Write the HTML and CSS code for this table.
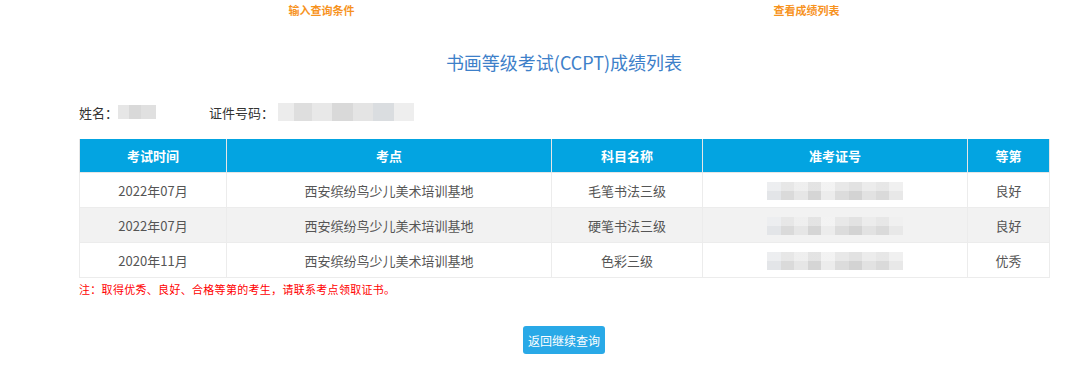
FILE: index.html
```html
<!DOCTYPE html>
<html lang="zh-CN">
<head>
<meta charset="utf-8">
<title>成绩列表</title>
<link rel="stylesheet" href="styles.css">
</head>
<body>
<div class="page">
  <div class="tabs">
    <div class="tab">输入查询条件</div>
    <div class="tab">查看成绩列表</div>
  </div>
  <h1 class="title">书画等级考试(CCPT)成绩列表</h1>
  <div class="info">
    <span class="label">姓名：</span><span class="blur blur-name"></span>
    <span class="label label-id">证件号码：</span><span class="blur blur-id"></span>
  </div>
  <table class="grid">
    <colgroup>
      <col class="c1"><col class="c2"><col class="c3"><col class="c4"><col class="c5">
    </colgroup>
    <thead>
      <tr><th>考试时间</th><th>考点</th><th>科目名称</th><th>准考证号</th><th>等第</th></tr>
    </thead>
    <tbody>
      <tr><td>2022年07月</td><td>西安缤纷鸟少儿美术培训基地</td><td>毛笔书法三级</td><td><span class="blur blur-no"></span></td><td>良好</td></tr>
      <tr class="alt"><td>2022年07月</td><td>西安缤纷鸟少儿美术培训基地</td><td>硬笔书法三级</td><td><span class="blur blur-no"></span></td><td>良好</td></tr>
      <tr><td>2020年11月</td><td>西安缤纷鸟少儿美术培训基地</td><td>色彩三级</td><td><span class="blur blur-no"></span></td><td>优秀</td></tr>
    </tbody>
  </table>
  <p class="note">注：取得优秀、良好、合格等第的考生，请联系考点领取证书。</p>
  <div class="actions"><button class="btn">返回继续查询</button></div>
</div>
</body>
</html>
```
FILE: styles.css
```css
html, body { margin: 0; padding: 0; background: #fff; }
body { font-family: "Microsoft YaHei", "Noto Sans CJK SC", "Noto Sans", sans-serif; color: #333; }
.page { width: 970px; margin-left: 79px; }
.tabs { display: flex; height: 20px; align-items: center; }
.tab { flex: 1; text-align: center; font-size: 11px; font-weight: bold; color: #f7931e; line-height: 20px; }
.title { margin: 30px 0 0; text-align: center; font-size: 18px; font-weight: normal; color: #3d80c9; line-height: 24px; }
.info { margin-top: 28px; display: flex; align-items: center; font-size: 13px; color: #333; height: 20px; }
.label-id { margin-left: 53px; }
.blur { display: inline-block; }
.blur-name { width: 38px; height: 14px; background: linear-gradient(90deg, #e6e6e6 0 30%, #d9d9d9 30% 60%, #e0e0e0 60% 100%); }
.blur-id { width: 136px; height: 18px; margin-left: 4px; background: linear-gradient(90deg, #ececec 0 12%, #dedede 12% 25%, #e8e8e8 25% 40%, #d9d9d9 40% 55%, #e4e4e4 55% 70%, #dadde0 70% 85%, #eeeeee 85% 100%); }
.grid { margin-top: 17px; width: 970px; border-collapse: collapse; table-layout: fixed; font-size: 13px; }
.c1 { width: 147px; } .c2 { width: 325px; } .c3 { width: 151px; } .c4 { width: 265px; } .c5 { width: 82px; }
.grid th { background: #03a4e1; color: #fff; font-weight: bold; height: 33px; padding: 0; border: 1px solid #e6e6e6; border-top: 0; }
.grid th + th { border-left: 1px solid #7fd0f0; }
.grid td { height: 34px; padding: 0; text-align: center; color: #555; border: 1px solid #ececec; }
.grid tr.alt td { background: #f2f2f2; }
.blur-no { width: 136px; height: 18px; vertical-align: middle; background:
  linear-gradient(180deg, rgba(255,255,255,0.35) 0 50%, rgba(255,255,255,0) 50% 100%),
  linear-gradient(90deg, #e3e5e8 0 10%, #dadada 10% 20%, #e6e6e6 20% 30%, #d5d5d5 30% 40%, #ececec 40% 50%, #dcdcdc 50% 60%, #d3d3d3 60% 70%, #e2e2e2 70% 80%, #dadada 80% 90%, #e8e8e8 90% 100%); }
.note { margin: 3px 0 0; font-size: 11px; letter-spacing: 0.3px; color: #f00; line-height: 16px; }
.actions { margin-top: 29px; display: flex; justify-content: center; }
.btn { width: 82px; height: 28px; border: 0; border-radius: 3px; background: #29a9e7; color: #fff; font-family: inherit; font-size: 12px; padding: 0; }
```
